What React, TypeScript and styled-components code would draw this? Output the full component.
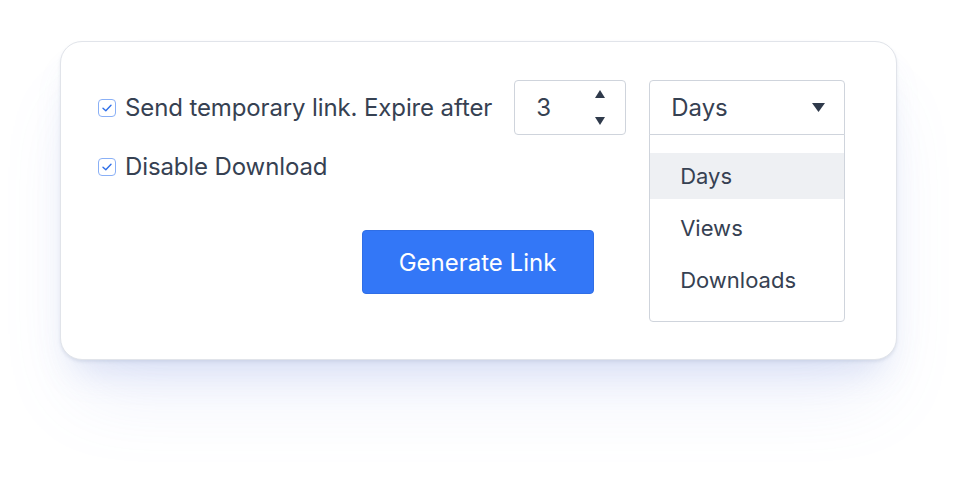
import React, { useState } from "react";
import { styled, createGlobalStyle } from "styled-components";

const GlobalStyle = createGlobalStyle`
  html, body {
    margin: 0;
    padding: 0;
    background: #ffffff;
    font-family: "Inter", "Noto Sans", sans-serif;
  }
`;

const Page = styled.div`
  width: 956px;
  height: 479px;
  padding: 41px 0 0 60px;
  box-sizing: border-box;
  overflow: hidden;
`;

const Card = styled.div`
  width: 837px;
  height: 319px;
  box-sizing: border-box;
  background: #fff;
  border: 1px solid #e1e4ea;
  border-radius: 22px;
  padding: 38px 51px 0 36px;
  display: flex;
  flex-direction: column;
  box-shadow: 0 2px 3px rgba(160, 170, 195, 0.25),
    0 22px 36px -14px rgba(110, 135, 215, 0.22),
    0 50px 80px -20px rgba(120, 145, 225, 0.14);
`;

const Row = styled.div`
  display: flex;
  align-items: center;
`;

const CheckRow = styled.label`
  display: flex;
  align-items: center;
  flex-shrink: 0;
  white-space: nowrap;
  gap: 9px;
  font-size: 24px;
  line-height: 28px;
  color: #364152;
  letter-spacing: -0.12px;
`;

const Box = styled.span`
  width: 18px;
  height: 18px;
  box-sizing: border-box;
  border: 1.5px solid #8ab0f6;
  border-radius: 4px;
  display: flex;
  align-items: center;
  justify-content: center;
  margin-left: 1px;
`;

const NumberBox = styled.div`
  margin-left: 22px;
  width: 112px;
  height: 55px;
  flex-shrink: 0;
  box-sizing: border-box;
  border: 1px solid #cfd4dc;
  border-radius: 4px;
  display: flex;
  align-items: center;
  padding-left: 21px;
  font-size: 24px;
  color: #364152;
  position: relative;
`;

const Spinner = styled.div`
  position: absolute;
  right: 20px;
  top: 9px;
  bottom: 9px;
  display: flex;
  flex-direction: column;
  justify-content: space-between;
`;

const SelectWrap = styled.div`
  margin-left: 23px;
  width: 196px;
  flex-shrink: 0;
  position: relative;
`;

const SelectBox = styled.div`
  height: 55px;
  box-sizing: border-box;
  border: 1px solid #cfd4dc;
  border-radius: 4px 4px 0 0;
  display: flex;
  align-items: center;
  justify-content: space-between;
  padding: 0 19px 0 21px;
  font-size: 24px;
  color: #364152;
`;

const Menu = styled.ul`
  position: absolute;
  left: 0;
  right: 0;
  top: 54px;
  margin: 0;
  padding: 18px 0;
  list-style: none;
  background: #fff;
  border: 1px solid #cfd4dc;
  border-radius: 0 0 4px 4px;
  display: flex;
  flex-direction: column;
  gap: 6px;
`;

const MenuItem = styled.li<{ $active?: boolean }>`
  height: 46px;
  display: flex;
  align-items: center;
  padding-left: 30px;
  font-size: 22px;
  color: #364152;
  background: ${(p) => (p.$active ? "#eef0f3" : "transparent")};
`;

const SecondRow = styled(Row)`
  margin-top: 18px;
`;

const Footer = styled.div`
  display: flex;
  justify-content: center;
  margin-top: 49px;
  padding-left: 13px;
`;

const Button = styled.button`
  width: 232px;
  height: 64px;
  border: 1px solid #2f6ee6;
  border-radius: 4px;
  background: #3377f7;
  color: #fff;
  font-family: "Inter", "Noto Sans", sans-serif;
  font-size: 24px;
  cursor: pointer;
`;

const Check = () => (
  <Box>
    <svg width="10" height="8" viewBox="0 0 10 8" fill="none">
      <path d="M1 4.2 L3.8 6.8 L9 1.2" stroke="#2f6fe8" strokeWidth="1.4" strokeLinecap="round" strokeLinejoin="round" />
    </svg>
  </Box>
);

const Tri = ({ up, w, h }: { up?: boolean; w: number; h: number }) => (
  <svg width={w} height={h} viewBox={`0 0 ${w} ${h}`}>
    <path d={up ? `M0 ${h} L${w / 2} 0 L${w} ${h} Z` : `M0 0 L${w} 0 L${w / 2} ${h} Z`} fill="#2f3a4b" />
  </svg>
);

export default function App() {
  const [unit] = useState("Days");
  const options = ["Days", "Views", "Downloads"];
  return (
    <Page>
      <GlobalStyle />
      <Card>
        <Row>
          <CheckRow>
            <Check />
            Send temporary link. Expire after
          </CheckRow>
          <NumberBox>
            3
            <Spinner>
              <Tri up w={10} h={8} />
              <Tri w={10} h={8} />
            </Spinner>
          </NumberBox>
          <SelectWrap>
            <SelectBox>
              {unit}
              <Tri w={13} h={9} />
            </SelectBox>
            <Menu>
              {options.map((o) => (
                <MenuItem key={o} $active={o === unit}>
                  {o}
                </MenuItem>
              ))}
            </Menu>
          </SelectWrap>
        </Row>
        <SecondRow>
          <CheckRow>
            <Check />
            Disable Download
          </CheckRow>
        </SecondRow>
        <Footer>
          <Button>Generate Link</Button>
        </Footer>
      </Card>
    </Page>
  );
}
